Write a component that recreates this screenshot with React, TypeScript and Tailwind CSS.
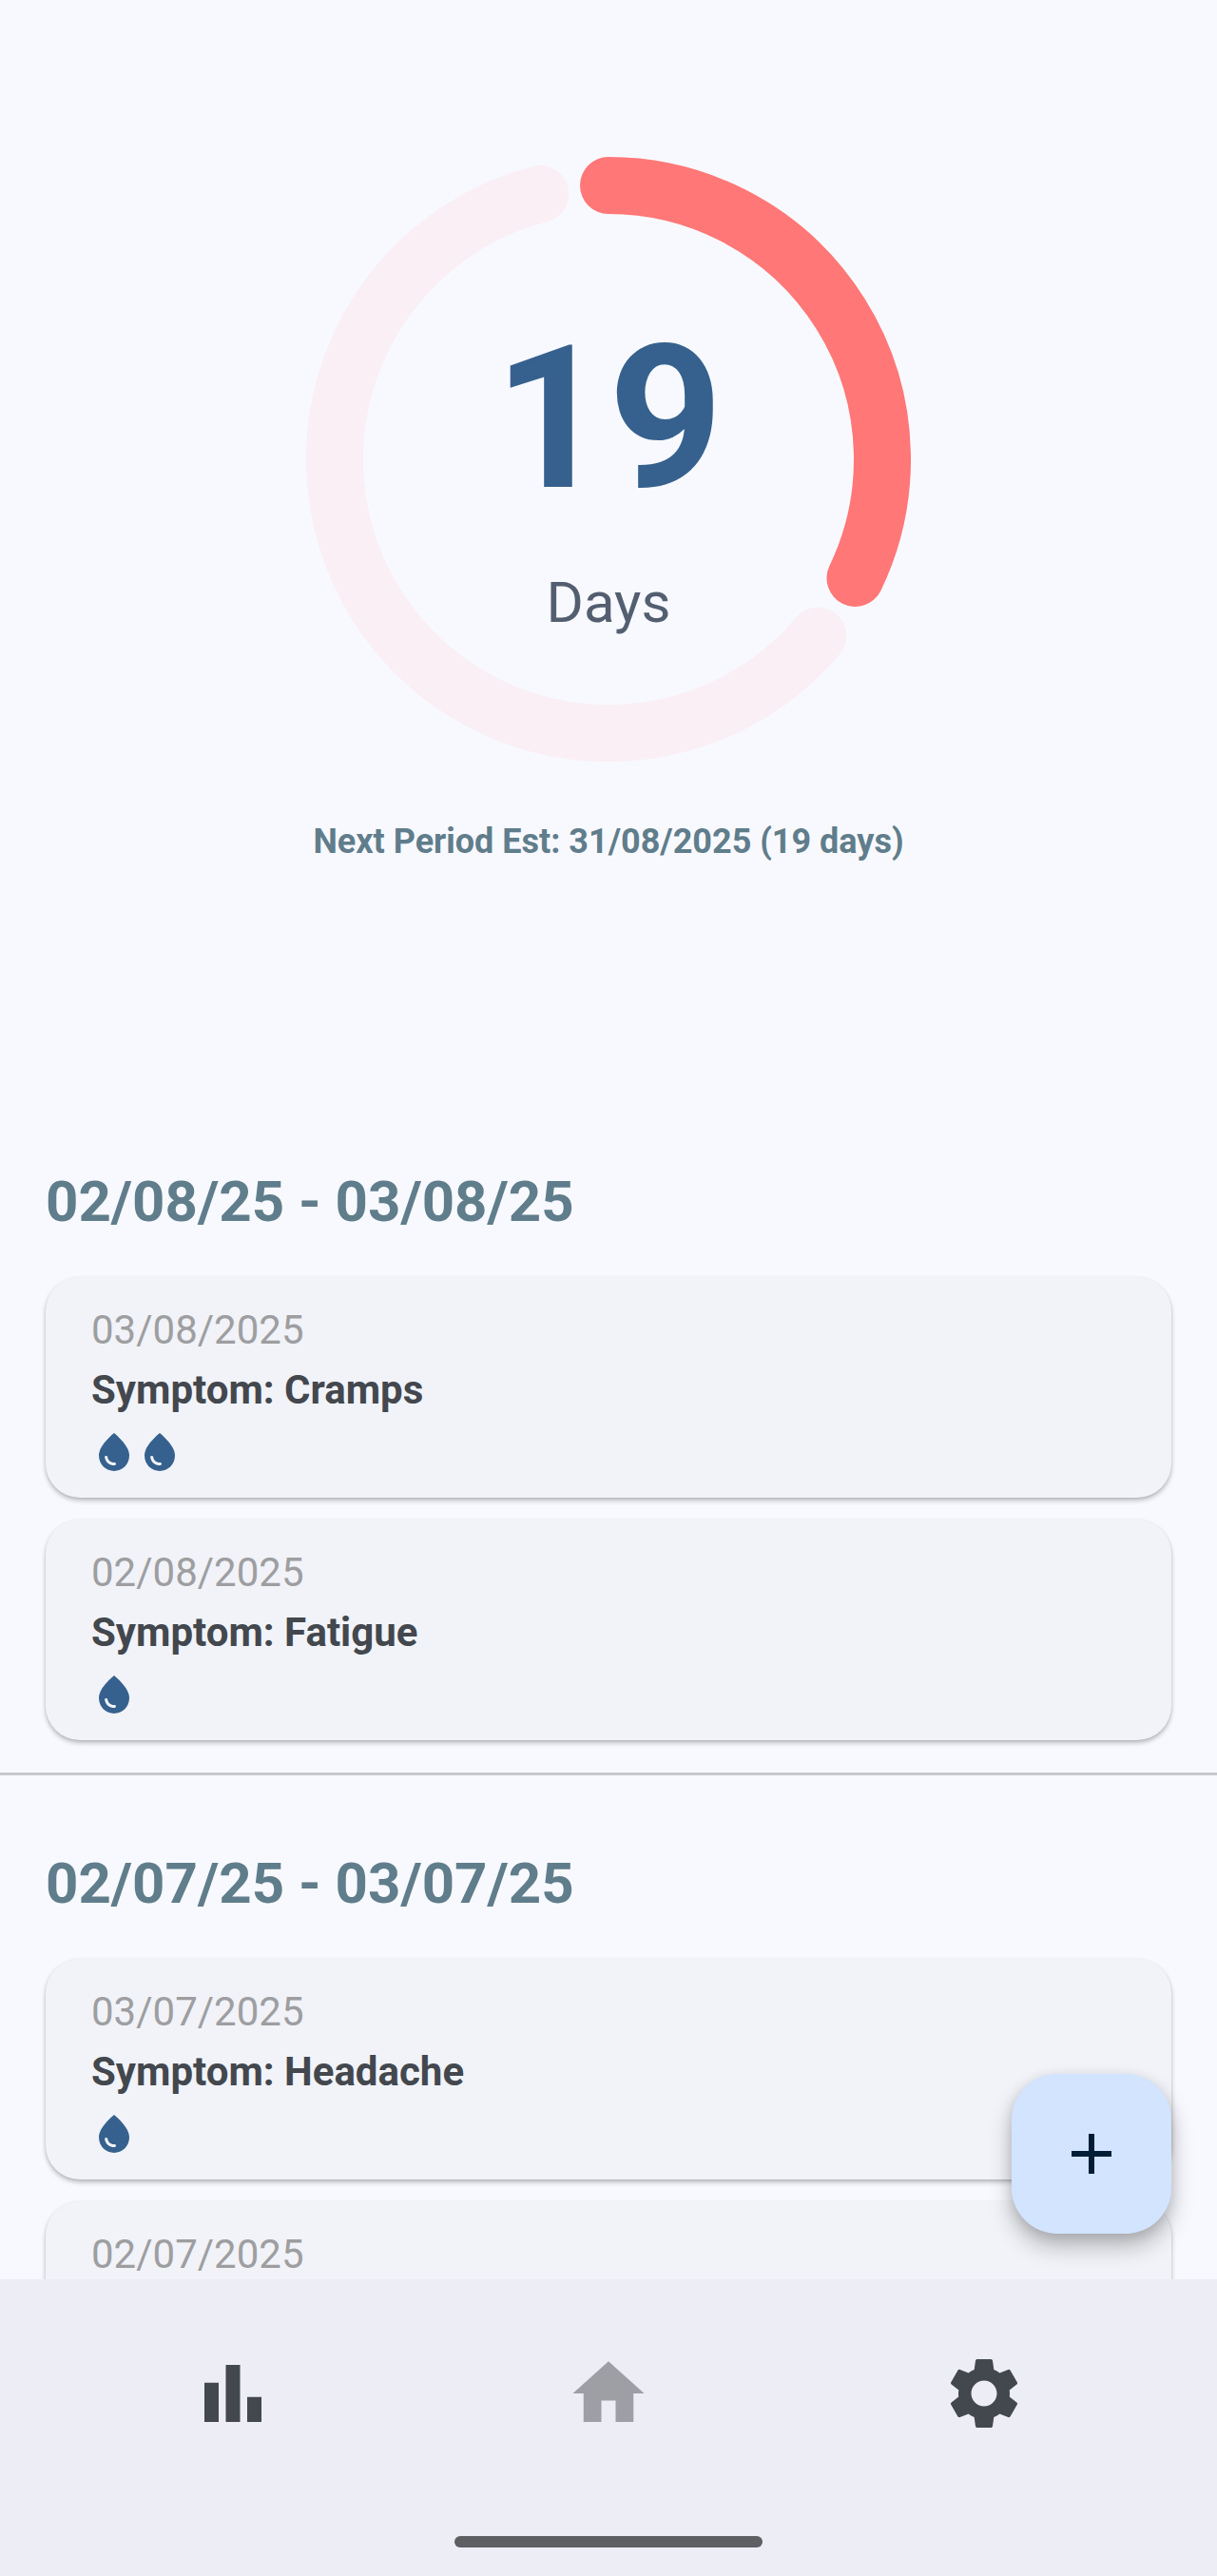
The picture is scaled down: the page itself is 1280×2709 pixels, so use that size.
import { MdAdd, MdBarChart, MdHome, MdSettings, MdWaterDrop } from "react-icons/md";

type Entry = { date: string; symptom?: string; flow: number };
type Period = { range: string; entries: Entry[] };

const PERIODS: Period[] = [
  {
    range: "02/08/25 - 03/08/25",
    entries: [
      { date: "03/08/2025", symptom: "Cramps", flow: 2 },
      { date: "02/08/2025", symptom: "Fatigue", flow: 1 },
    ],
  },
  {
    range: "02/07/25 - 03/07/25",
    entries: [
      { date: "03/07/2025", symptom: "Headache", flow: 1 },
      { date: "02/07/2025", flow: 0 },
    ],
  },
];

const RADIUS = 288;
const CENTER = 318;

// Arc between two clockwise angles measured from twelve o'clock.
function arc(from: number, to: number) {
  const point = (deg: number) => {
    const a = (deg * Math.PI) / 180;
    return `${CENTER + RADIUS * Math.sin(a)} ${CENTER - RADIUS * Math.cos(a)}`;
  };
  return `M ${point(from)} A ${RADIUS} ${RADIUS} 0 ${to - from > 180 ? 1 : 0} 1 ${point(to)}`;
}

function CycleRing({ days, progress }: { days: number; progress: number }) {
  const end = progress * 360;
  const gap = 14.4;
  return (
    <div className="grid w-[636px] max-w-full">
      <svg viewBox="0 0 636 636" className="col-start-1 row-start-1 w-full" fill="none" strokeWidth={60} strokeLinecap="round" aria-hidden="true">
        <path d={arc(end + gap, 360 - gap)} stroke="#f9eff4" />
        <path d={arc(0, end)} stroke="#ff7777" />
      </svg>
      <div className="col-start-1 row-start-1 flex flex-col items-center gap-8 pt-[155px]">
        <p className="text-[210px] leading-[240px] font-bold text-[#36618e]">{days}</p>
        <p className="text-[60px] leading-[84px] text-[#535f70]">Days</p>
      </div>
    </div>
  );
}

function EntryCard({ entry }: { entry: Entry }) {
  return (
    <li className="min-h-[232px] rounded-[36px] bg-[#f1f3f8] px-12 py-6 shadow-[0_3px_5px_rgba(0,0,0,0.24),0_1px_3px_rgba(0,0,0,0.08)]">
      <p className="text-[42px] leading-[63px] text-[#9e9ea1]">{entry.date}</p>
      {entry.symptom && (
        <p className="text-[42px] leading-[63px] font-bold text-[#43474e]">Symptom: {entry.symptom}</p>
      )}
      <div className="mt-[10px] flex text-[#36618e]">
        {Array.from({ length: entry.flow }, (_, i) => (
          <MdWaterDrop key={i} className="size-12" />
        ))}
      </div>
    </li>
  );
}

function PeriodSection({ period }: { period: Period }) {
  return (
    <section className="px-12 pt-[78px] pb-[34px]">
      <h2 className="text-[60px] leading-[72px] font-bold text-[#607d8b]">{period.range}</h2>
      <ul className="mt-[43px] flex flex-col gap-[23px]">
        {period.entries.map((entry) => (
          <EntryCard key={entry.date} entry={entry} />
        ))}
      </ul>
    </section>
  );
}

export default function App() {
  return (
    <div className="flex h-screen flex-col bg-[#f8f9ff] font-['Roboto',sans-serif]">
      <main className="relative flex min-h-0 flex-1 flex-col">
        <div className="min-h-0 flex-1 overflow-y-auto [scrollbar-width:none]">
          <header className="flex flex-col items-center pt-[165px] pb-[241px]">
            <CycleRing days={19} progress={9 / 28} />
            <p className="mt-15 text-[36px] leading-[48px] font-bold text-[#607d8b]">
              Next Period Est: 31/08/2025 (19 days)
            </p>
          </header>
          <div className="divide-y-[3px] divide-[#c7c8ce]">
            {PERIODS.map((period) => (
              <PeriodSection key={period.range} period={period} />
            ))}
          </div>
        </div>
        <button
          type="button"
          aria-label="Add entry"
          className="absolute right-12 bottom-12 flex size-[168px] items-center justify-center rounded-[48px] bg-[#d2e4ff] text-[#001d36] shadow-[0_14px_24px_rgba(0,0,0,0.24),0_4px_14px_rgba(0,0,0,0.12)]"
        >
          <MdAdd className="size-[72px]" />
        </button>
      </main>
      <nav className="flex flex-col items-center bg-[#ecedf5] px-12 pt-[75px] pb-[30px]">
        <div className="grid w-full grid-cols-3 justify-items-center text-[#43474e]">
          <a href="#stats" aria-label="Statistics">
            <MdBarChart className="size-[90px]" />
          </a>
          <a href="#home" aria-label="Home" aria-current="page" className="text-[#9e9fa4]">
            <MdHome className="size-[90px]" />
          </a>
          <a href="#settings" aria-label="Settings">
            <MdSettings className="size-[90px]" />
          </a>
        </div>
        <div className="mt-[105px] h-3 w-[324px] rounded-full bg-[#5e5f63]" />
      </nav>
    </div>
  );
}
